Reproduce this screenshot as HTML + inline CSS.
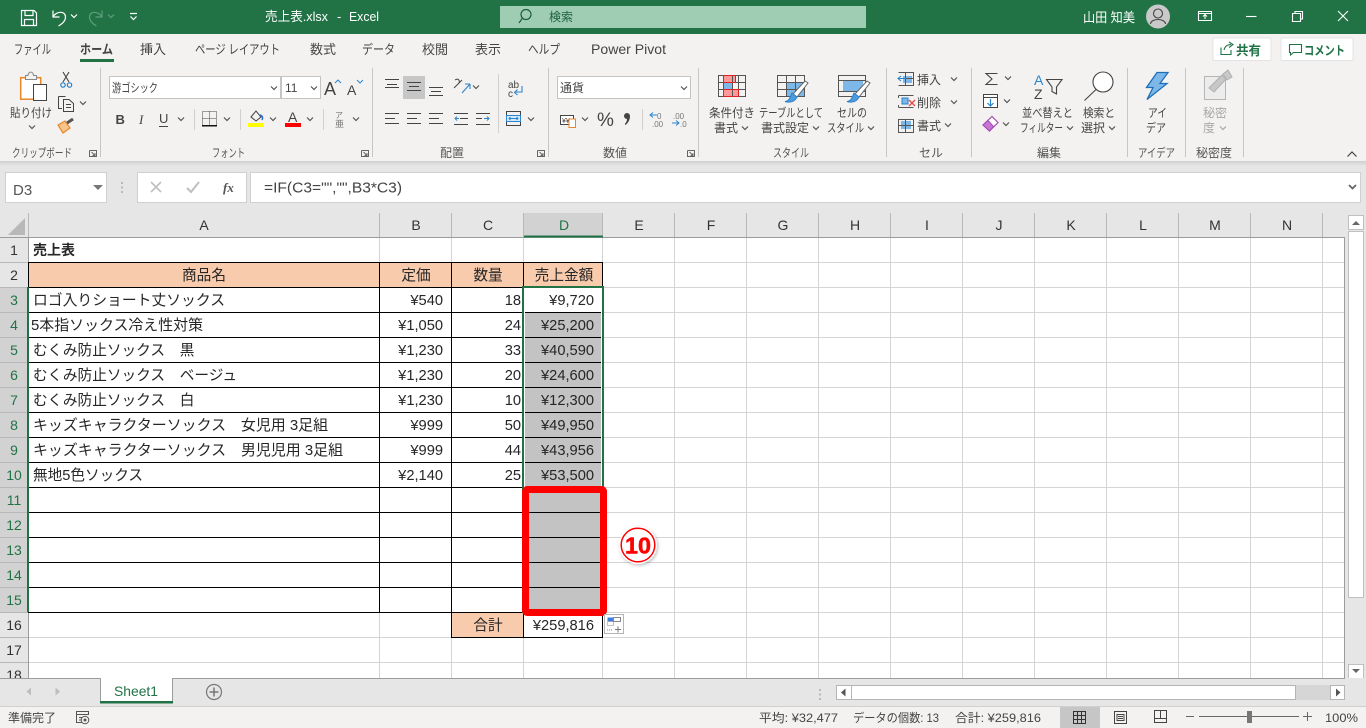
<!DOCTYPE html>
<html lang="ja"><head><meta charset="utf-8"><title>売上表.xlsx - Excel</title>
<style>
html,body{margin:0;padding:0;background:#e6e6e6;overflow:hidden}
svg{display:block;font-family:"Liberation Sans","Noto Sans CJK JP",sans-serif}
.t{font-size:13px;fill:#444}
.r{font-size:12px;fill:#444}
.g{font-size:12px;fill:#555}
.c{font-size:14.67px;fill:#262626}
.h{font-size:14px;fill:#333}
.hg{font-size:14px;fill:#217346}
.e{text-anchor:end}.m{text-anchor:middle}
.s{font-size:12px;fill:#444}
</style></head><body>
<svg width="1366" height="728" viewBox="0 0 1366 728" xmlns="http://www.w3.org/2000/svg">
<defs>
<path id="cv" d="M-3 -1.5L0 1.5L3 -1.5" fill="none" stroke="#555" stroke-width="1.2"/>
<path id="cw" d="M-3 -1.5L0 1.5L3 -1.5" fill="none" stroke="#fff" stroke-width="1.2"/>
<path id="lf" d="M0 .5H14M0 5.5H10M0 10.5H14" fill="none" stroke="#444" stroke-width="1"/>
<linearGradient id="sh" x1="0" y1="0" x2="0" y2="1"><stop offset="0" stop-color="#cfcfcf"/><stop offset="1" stop-color="#e6e6e6"/></linearGradient>
<filter id="ds" x="-30%" y="-30%" width="160%" height="160%"><feDropShadow dx="1" dy="1.500" stdDeviation="1.500" flood-color="#000" flood-opacity=".25"/></filter>
</defs>
<rect width="1366" height="728" fill="#e6e6e6"/>
<!-- title bar -->
<rect width="1366" height="34" fill="#217346"/>
<g fill="none" stroke="#fff" stroke-width="1.2">
<path d="M21.5 10.5H34L36.5 13V25.5H21.5Z"/><path d="M25 10.5V15.5H33V10.5M24.5 25.5V19.5H33.5V25.5"/>
<path d="M53 10.5V17H59.5M53 17C56 11 65.5 10.5 65.5 17C65.5 21 62 24 58.5 26"/>
<g stroke="#5f9c7e"><path d="M102 10.5V17H95.5M102 17C99 11 89.5 10.5 89.5 17C89.5 21 93 24 96.5 26"/></g>
<path d="M130 13.5H137" />
</g>
<use href="#cw" x="74" y="16"/><use href="#cw" x="133.500" y="18"/>
<path d="M108 14.500L111 17.500L114 14.500" fill="none" stroke="#5f9c7e" stroke-width="1.200"/>
<text x="265" y="21" font-size="13" fill="#fff" textLength="63" lengthAdjust="spacingAndGlyphs">売上表.xlsx</text>
<text x="337" y="21" font-size="13" fill="#fff">-</text>
<text x="349" y="21" font-size="13" fill="#fff" textLength="30" lengthAdjust="spacingAndGlyphs">Excel</text>
<rect x="500" y="6" width="366" height="22" fill="#9fcdb3"/>
<circle cx="526" cy="14.500" r="5" fill="none" stroke="#1e5f3c" stroke-width="1.200"/><path d="M522.500 18L519 23" stroke="#1e5f3c" stroke-width="1.200"/>
<text x="549" y="21" font-size="12" fill="#1e5f3c" textLength="24" lengthAdjust="spacingAndGlyphs">検索</text>
<text x="1083" y="22" font-size="13" fill="#fff" textLength="52" lengthAdjust="spacingAndGlyphs">山田 知美</text>
<circle cx="1158" cy="16.500" r="12" fill="#c9c9c9"/>
<circle cx="1158" cy="13.500" r="4.500" fill="none" stroke="#444" stroke-width="1.100"/><path d="M1150.500 24C1151 18 1165 18 1165.500 24" fill="none" stroke="#444" stroke-width="1.100"/>
<g fill="none" stroke="#fff" stroke-width="1.100">
<path d="M1198.500 11.500H1211.500V20.500H1198.500ZM1198.500 13.500H1211.500M1205 19V15M1203 16.500L1205 14.500L1207 16.500"/>
<path d="M1246 16.500H1256.500"/>
<path d="M1292.500 13.500H1300.500V21.500H1292.500ZM1295 13.500V11.500H1302.500V19H1300.500"/>
<path d="M1338 11L1348 21M1348 11L1338 21"/>
</g>
<!-- ribbon -->
<rect y="34" width="1366" height="127" fill="#f3f2f1"/>
<rect y="161" width="1366" height="5" fill="url(#sh)"/>
<text x="14" y="54" class="t" textLength="37" lengthAdjust="spacingAndGlyphs">ファイル</text>
<text x="80" y="54" class="t" font-weight="700" textLength="33" lengthAdjust="spacingAndGlyphs">ホーム</text>
<rect x="80" y="59" width="34" height="3" fill="#217346"/>
<text x="140" y="54" class="t" textLength="26" lengthAdjust="spacingAndGlyphs">挿入</text>
<text x="195" y="54" class="t" textLength="85" lengthAdjust="spacingAndGlyphs">ページ レイアウト</text>
<text x="310" y="54" class="t" textLength="26" lengthAdjust="spacingAndGlyphs">数式</text>
<text x="362" y="54" class="t" textLength="33" lengthAdjust="spacingAndGlyphs">データ</text>
<text x="422" y="54" class="t" textLength="26" lengthAdjust="spacingAndGlyphs">校閲</text>
<text x="475" y="54" class="t" textLength="26" lengthAdjust="spacingAndGlyphs">表示</text>
<text x="528" y="54" class="t" textLength="32" lengthAdjust="spacingAndGlyphs">ヘルプ</text>
<text x="591" y="54" font-size="14" fill="#444" textLength="75" lengthAdjust="spacingAndGlyphs">Power Pivot</text>
<rect x="1213" y="38" width="58" height="22.500" rx="1" fill="#fff" stroke="#e3e3e3"/>
<path d="M1221 47.500V54.500H1231V50M1224 50C1225 46 1228 44.500 1231 44.500M1229 42L1233 44.500L1229 47.500" fill="none" stroke="#217346" stroke-width="1.100"/>
<text x="1236" y="55" font-size="13" font-weight="700" fill="#217346" textLength="25" lengthAdjust="spacingAndGlyphs">共有</text>
<rect x="1281" y="38" width="72" height="22.500" rx="1" fill="#fff" stroke="#e3e3e3"/>
<path d="M1289.500 44.500H1301.500V52.500H1293.500L1290.500 55V52.500H1289.500Z" fill="none" stroke="#217346" stroke-width="1.100"/>
<text x="1304" y="55" font-size="12.500" font-weight="700" fill="#217346" textLength="41" lengthAdjust="spacingAndGlyphs">コメント</text>
<!-- separators -->
<path d="M100.500 68V157M372.500 68V157M548.500 68V157M698.500 68V157M886.500 68V157M971.500 68V157M1127.500 68V157M1185.500 68V157M1243.500 68V157" stroke="#c6c6c6" fill="none"/>
<path d="M194.500 109V130M240.500 109V130M323.500 109V130M498.500 74V133M642.500 109V130" stroke="#d0d0d0" fill="none"/>
<!-- group labels -->
<text x="12" y="157" class="g" textLength="60" lengthAdjust="spacingAndGlyphs">クリップボード</text>
<text x="212" y="157" class="g" textLength="33" lengthAdjust="spacingAndGlyphs">フォント</text>
<text x="440" y="157" class="g" textLength="24" lengthAdjust="spacingAndGlyphs">配置</text>
<text x="603" y="157" class="g" textLength="24" lengthAdjust="spacingAndGlyphs">数値</text>
<text x="773" y="157" class="g" textLength="36" lengthAdjust="spacingAndGlyphs">スタイル</text>
<text x="919" y="157" class="g" textLength="24" lengthAdjust="spacingAndGlyphs">セル</text>
<text x="1037" y="157" class="g" textLength="24" lengthAdjust="spacingAndGlyphs">編集</text>
<text x="1138" y="157" class="g" textLength="37" lengthAdjust="spacingAndGlyphs">アイデア</text>
<text x="1196" y="157" class="g" textLength="36" lengthAdjust="spacingAndGlyphs">秘密度</text>
<g fill="none" stroke="#666" stroke-width="1">
<path d="M89.500 150.500V156.500H96.500V150.500H89.500M91.500 152L95 155.500M95 153V155.500H92.500"/>
<path d="M361.500 150.500V156.500H368.500V150.500H361.500M363.500 152L367 155.500M367 153V155.500H364.500"/>
<path d="M537.500 150.500V156.500H544.500V150.500H537.500M539.500 152L543 155.500M543 153V155.500H540.500"/>
<path d="M687.500 150.500V156.500H694.500V150.500H687.500M689.500 152L693 155.500M693 153V155.500H690.500"/>
<path d="M1347.500 156.500L1352 152L1356.500 156.500" stroke="#444" stroke-width="1.200"/>
</g>
<!-- clipboard -->
<rect x="20.700" y="77.700" width="20" height="21.500" fill="#fff" stroke="#e8862a" stroke-width="1.500"/>
<path d="M25.500 79.500V75.500H28C28.500 71 33 71 33.500 75.500H36.500V79.500Z" fill="#f3f2f1" stroke="#888"/>
<rect x="33.500" y="84.500" width="13" height="16" fill="#fff" stroke="#444"/>
<text x="10" y="117" class="r" textLength="42" lengthAdjust="spacingAndGlyphs">貼り付け</text>
<use href="#cv" x="32" y="127"/>
<g fill="none" stroke="#444" stroke-width="1.100"><path d="M63 72L69 82M69 72L63 82"/></g>
<circle cx="63" cy="85" r="2.200" fill="none" stroke="#2a7fc9" stroke-width="1.200"/><circle cx="69.500" cy="85" r="2.200" fill="none" stroke="#2a7fc9" stroke-width="1.200"/>
<path d="M58.500 96.500H65.500M58.500 96.500V108.500H62M63.500 99.500H69L73.500 103.500V111.500H63.500ZM66 104.500H71M66 107.500H71" fill="none" stroke="#444" stroke-width="1"/>
<use href="#cv" x="83" y="103"/>
<path d="M58 125L65 121L70 128L63 133Z" fill="#f7c58a" stroke="#e8862a" stroke-width="1.200"/>
<path d="M67 123L73 119" stroke="#555" stroke-width="3"/>
<!-- font -->
<rect x="109.500" y="76.500" width="171" height="22" fill="#fff" stroke="#c4c4c4"/>
<text x="112" y="92" class="r" textLength="46" lengthAdjust="spacingAndGlyphs">游ゴシック</text>
<use href="#cv" x="274" y="88"/>
<rect x="281.500" y="76.500" width="39" height="22" fill="#fff" stroke="#c4c4c4"/>
<text x="285" y="92" font-size="12" fill="#444">11</text>
<use href="#cv" x="314" y="88"/>
<text x="324" y="95" font-size="18" fill="#444">A</text>
<path d="M335 83L338 80L341 83" fill="none" stroke="#2a86d0" stroke-width="1"/>
<text x="347" y="95" font-size="14" fill="#444">A</text>
<path d="M357 80L360 83L363 80" fill="none" stroke="#2a86d0" stroke-width="1"/>
<text x="115.500" y="124" font-size="13" font-weight="700" fill="#444">B</text>
<text x="139" y="124" font-size="13" font-style="italic" font-family="Liberation Serif" fill="#444">I</text>
<text x="159" y="123" font-size="13" fill="#444">U</text><path d="M159 126.500H168" stroke="#444"/>
<use href="#cv" x="181" y="119"/>
<path d="M202.500 111.500H216.500V125.500H202.500ZM209.500 111.500V125.500M202.500 118.500H216.500" fill="none" stroke="#444" stroke-dasharray="1 1"/>
<rect x="202" y="125" width="15" height="1.500" fill="#111"/>
<use href="#cv" x="227" y="119"/>
<path d="M251 117L256 111L261 117L256 121Z" fill="none" stroke="#444"/>
<path d="M260 115C263 116 263 118 262 120" stroke="#2a6fc9" stroke-width="1.500" fill="none"/>
<rect x="248" y="123" width="16" height="4" fill="#ffff00"/>
<use href="#cv" x="273" y="119"/>
<text x="288" y="122" font-size="14" fill="#444">A</text>
<rect x="285" y="123" width="16" height="4" fill="#ff0000"/>
<use href="#cv" x="310" y="119"/>
<text x="335" y="118" font-size="8" fill="#777">ア</text>
<text x="335" y="127" font-size="9" fill="#777">亜</text>
<use href="#cv" x="356" y="119"/>
<!-- alignment -->
<rect x="403" y="76" width="22" height="23" fill="#c6c6c6"/>
<g fill="none" stroke="#444" stroke-width="1">
<path d="M385 79.500H399M387 84.500H397M385 87.500H399"/>
<path d="M407 82.500H421M409 86.500H419M407 90.500H421"/>
<path d="M429 87.500H443M431 91.500H441M429 95.500H443"/>
</g>
<path d="M454 88L462 80M455 80C458 78 460 80 459 83" fill="none" stroke="#444"/>
<path d="M462 93L470 84M470 84H465M470 84V89" fill="none" stroke="#2a86d0" stroke-width="1.100"/>
<use href="#cv" x="476" y="87"/>
<text x="508" y="88" font-size="10" fill="#444">ab</text>
<text x="508" y="97" font-size="10" fill="#444">c</text>
<path d="M522 86V92H515M517.500 89.500L514.500 92.500L517.500 95" fill="none" stroke="#2a86d0" stroke-width="1.100"/>
<use href="#lf" x="385" y="113"/><use href="#lf" x="407" y="113"/><use href="#lf" x="429" y="113"/>
<path d="M454 113.500H468M460 118.500H468M454 124.500H468M476 113.500H490M476 118.500H482M476 124.500H490" stroke="#444" fill="none"/>
<path d="M455 118.500H459M457 116.500L455 118.500L457 120.500" stroke="#2a86d0" fill="none"/>
<path d="M484 118.500H489M487 116.500L489 118.500L487 120.500" stroke="#2a86d0" fill="none"/>
<rect x="506.500" y="111.500" width="14" height="14" fill="none" stroke="#444"/>
<rect x="506.500" y="115.500" width="14" height="6" fill="#d6e9f8" stroke="#2a86d0"/>
<path d="M509 118.500H518M510.500 117L509 118.500L510.500 120M516.500 117L518 118.500L516.500 120" stroke="#2a86d0" fill="none"/>
<use href="#cv" x="531" y="119"/>
<!-- number -->
<rect x="557.500" y="76.500" width="133" height="22" fill="#fff" stroke="#c4c4c4"/>
<text x="560" y="92" class="r" textLength="24" lengthAdjust="spacingAndGlyphs">通貨</text>
<use href="#cv" x="684" y="88"/>
<rect x="560.500" y="115.500" width="13" height="9" fill="#fff" stroke="#444"/>
<text x="562" y="123" font-size="7" fill="#444">¥¥</text>
<rect x="569" y="119" width="6.500" height="8.500" fill="#fff" stroke="#e8862a"/>
<use href="#cv" x="585" y="119"/>
<text x="597" y="126" font-size="19" fill="#444">%</text>
<path d="M624 116a3 3 0 1 1 6 0C630 120 628 123 625.500 125L624.800 124C626.500 122 627 120.500 627 119A3 3 0 0 1 624 116Z" fill="#444"/>
<text x="657" y="119" font-size="8" fill="#777">0</text>
<text x="652" y="127" font-size="8" fill="#777">.00</text>
<path d="M650 115H657M653 112.500L650 115L653 117.500" stroke="#2a86d0" fill="none"/>
<text x="673" y="119" font-size="8" fill="#777">.00</text>
<text x="680" y="127" font-size="8" fill="#777">.0</text>
<path d="M672 123H679M676 120.500L679 123L676 125.500" stroke="#2a86d0" fill="none"/>
<!-- styles -->
<g shape-rendering="crispEdges">
<rect x="723" y="75" width="13" height="7" fill="#ff9999"/><rect x="723" y="82" width="9" height="7" fill="#7db8e8"/><rect x="723" y="89" width="15" height="8" fill="#ff9999"/>
<path d="M718.500 75.500H745.500V96.500H718.500ZM718.500 82.500H745.500M718.500 89.500H745.500M723.500 75.500V96.500M732.500 75.500V96.500M738.500 75.500V96.500" fill="none" stroke="#555"/>
<path d="M723.500 75.500H735.500V82.500H723.500ZM723.500 89.500H738.500V96.500H723.500Z" fill="none" stroke="#d22"/>
<rect x="786" y="82" width="19" height="15" fill="#7db8e8"/>
<path d="M777.500 75.500H804.500V96.500H777.500ZM777.500 82.500H804.500M777.500 89.500H804.500M786.500 75.500V96.500M795.500 75.500V96.500" fill="none" stroke="#555"/>
<rect x="843" y="80" width="20" height="12" fill="#7db8e8"/>
<path d="M838.500 75.500H865.500V96.500H838.500ZM838.500 80.500H865.500M838.500 91.500H865.500" fill="none" stroke="#555"/>
</g>
<g>
<path d="M793 94L805 81L808 83L797 97Z" fill="#fff" stroke="#666"/><path d="M785 101.500C789 101 790 98 792 93L797 97C795 102 789 103 785 101.500Z" fill="#4d9cdc" stroke="#2a7fc9"/>
<path d="M855 94L867 81L870 83L859 97Z" fill="#fff" stroke="#666"/><path d="M847 101.500C851 101 852 98 854 93L859 97C857 102 851 103 847 101.500Z" fill="#4d9cdc" stroke="#2a7fc9"/>
</g>
<text x="709" y="117" class="r" textLength="46" lengthAdjust="spacingAndGlyphs">条件付き</text>
<text x="714" y="132" class="r" textLength="24" lengthAdjust="spacingAndGlyphs">書式</text><use href="#cv" x="745" y="128"/>
<text x="759" y="117" class="r" textLength="64" lengthAdjust="spacingAndGlyphs">テーブルとして</text>
<text x="761" y="132" class="r" textLength="48" lengthAdjust="spacingAndGlyphs">書式設定</text><use href="#cv" x="816" y="128"/>
<text x="837" y="117" class="r" textLength="30" lengthAdjust="spacingAndGlyphs">セルの</text>
<text x="827" y="132" class="r" textLength="37" lengthAdjust="spacingAndGlyphs">スタイル</text><use href="#cv" x="871" y="128"/>
<!-- cells -->
<g shape-rendering="crispEdges" fill="none" stroke="#555">
<rect x="903" y="76" width="9" height="7" fill="#7db8e8" stroke="none"/>
<path d="M898.500 72.500H913.500V85.500H898.500M898.500 78.500H913.500M905.500 72.500V85.500"/>
<rect x="902" y="98" width="6" height="6" fill="#7db8e8" stroke="#2a7fc9"/>
<path d="M898.500 95.500H913.500M898.500 107.500H913.500M898.500 95.500V98M898.500 105V107.500"/>
<rect x="901" y="121" width="10" height="8" fill="#7db8e8" stroke="none"/>
<path d="M898.500 119.500H913.500V132.500H898.500ZM898.500 125.500H913.500M905.500 119.500V132.500"/>
</g>
<path d="M909 100L915 106M915 100L909 106" stroke="#e44" stroke-width="1.300"/>
<path d="M906 78.500H898M901 76L898 78.500L901 81" stroke="#2a86d0" fill="none" stroke-width="1.100"/>
<text x="917" y="84" class="r" textLength="24" lengthAdjust="spacingAndGlyphs">挿入</text><use href="#cv" x="954" y="79"/>
<text x="917" y="107" class="r" textLength="24" lengthAdjust="spacingAndGlyphs">削除</text><use href="#cv" x="954" y="102"/>
<text x="917" y="130" class="r" textLength="24" lengthAdjust="spacingAndGlyphs">書式</text><use href="#cv" x="948" y="125"/>
<!-- edit -->
<path d="M997.500 73.500H986L992 79L986 84.500H997.500" fill="none" stroke="#444" stroke-width="1.100"/>
<use href="#cv" x="1008" y="78"/>
<rect x="983.500" y="94.500" width="14" height="13" fill="#fff" stroke="#444"/>
<path d="M983.500 97.500H997.500" stroke="#444"/><path d="M990.500 99V106M987.500 103L990.500 106L993.500 103" stroke="#2a86d0" fill="none" stroke-width="1.200"/>
<use href="#cv" x="1007" y="101"/>
<path d="M983 125L992 116.500L998 122.500L989.500 131Z" fill="#fff" stroke="#a64ab5" stroke-width="1.200"/>
<path d="M983 125L988 120.500L993.500 126.500L989.500 131Z" fill="#c874d5" stroke="#a64ab5"/>
<use href="#cv" x="1006" y="124"/>
<text x="1034" y="85" font-size="14" fill="#2a86d0">A</text>
<text x="1034" y="99" font-size="14" fill="#444">Z</text>
<path d="M1046.500 79.500H1062L1056.500 87V94L1052 91.500V87Z" fill="none" stroke="#444" stroke-width="1.100"/>
<text x="1022" y="117" class="r" textLength="51" lengthAdjust="spacingAndGlyphs">並べ替えと</text>
<text x="1020" y="132" class="r" textLength="43" lengthAdjust="spacingAndGlyphs">フィルター</text><use href="#cv" x="1070" y="128"/>
<circle cx="1103" cy="82" r="10" fill="#fff" stroke="#444" stroke-width="1.100"/><path d="M1096 89.500L1084.500 100.500" stroke="#444" stroke-width="1.100"/>
<text x="1083" y="117" class="r" textLength="32" lengthAdjust="spacingAndGlyphs">検索と</text>
<text x="1081" y="132" class="r" textLength="24" lengthAdjust="spacingAndGlyphs">選択</text><use href="#cv" x="1112" y="128"/>
<path d="M1157 72.500H1168L1160 83.500H1167L1147 99.500L1153 87.500H1146.500Z" fill="#7db8e8" stroke="#1f6fb8" stroke-width="1.300"/>
<text x="1148" y="117" class="r" textLength="19" lengthAdjust="spacingAndGlyphs">アイ</text>
<text x="1146" y="132" class="r" textLength="20" lengthAdjust="spacingAndGlyphs">デア</text>
<rect x="1204.500" y="76.500" width="21" height="23" fill="#ececec" stroke="#b5b5b5"/>
<path d="M1209 88L1222 75L1226 79L1214 92ZM1223 74L1228 70L1232 77L1227 80Z" fill="#c8c8c8" stroke="#b0b0b0"/>
<text x="1203" y="117" font-size="12" fill="#a8a8a8" textLength="24" lengthAdjust="spacingAndGlyphs">秘密</text>
<text x="1203" y="132" font-size="12" fill="#a8a8a8" textLength="12" lengthAdjust="spacingAndGlyphs">度</text>
<path d="M1220 126.500L1223 129.500L1226 126.500" fill="none" stroke="#a8a8a8" stroke-width="1.200"/>
<!-- formula bar -->
<rect x="5.500" y="172.500" width="101" height="30" fill="#fff" stroke="#d0d0d0"/>
<text x="13" y="195" font-size="15" fill="#555">D3</text>
<path d="M93 185H103L98 190Z" fill="#777"/>
<path d="M122 182V184M122 186.500V188.500M122 191V193" stroke="#aaa" stroke-width="1.500"/>
<rect x="137.500" y="172.500" width="109" height="30" fill="#fff" stroke="#d0d0d0"/>
<path d="M151 182L161 192M161 182L151 192" stroke="#bfbfbf" stroke-width="1.600"/>
<path d="M187 188L191 192L199 182" fill="none" stroke="#bfbfbf" stroke-width="2"/>
<text x="223" y="192" font-size="13" font-style="italic" font-weight="700" font-family="Liberation Serif" fill="#555">fx</text>
<rect x="250.500" y="172.500" width="1110" height="30" fill="#fff" stroke="#d0d0d0"/>
<text x="264" y="192.500" font-size="14.500" fill="#444" textLength="138" lengthAdjust="spacingAndGlyphs">=IF(C3="","",B3*C3)</text>
<path d="M1349 185L1352.500 188.500L1356 185" fill="none" stroke="#666" stroke-width="1.800"/>
<!-- sheet bg -->
<rect x="29" y="238" width="1316" height="440" fill="#fff"/>
<rect x="0" y="213" width="1345" height="24" fill="#e6e6e6"/>
<rect x="0" y="238" width="28" height="440" fill="#e6e6e6"/>
<rect x="0" y="287" width="28" height="325" fill="#d2d2d2"/>
<rect x="524" y="213" width="78" height="24" fill="#d2d2d2"/>
<polygon points="25,218 25,235 8,235" fill="#b8b8b8"/>
<rect x="29" y="263" width="573" height="24" fill="#f8cbad"/>
<rect x="452" y="613" width="71" height="24" fill="#f8cbad"/>
<rect x="525" y="313" width="76" height="299" fill="#c3c3c3"/>
<g shape-rendering="crispEdges" fill="none">
<path stroke="#d4d4d4" d="M379.500 238V678M451.500 238V678M523.500 238V678M602.500 238V678M674.500 238V678M746.500 238V678M818.500 238V678M890.500 238V678M962.500 238V678M1034.500 238V678M1106.500 238V678M1178.500 238V678M1250.500 238V678M1322.500 238V678M29 262.500H1344M29 287.500H1344M29 312.500H1344M29 337.500H1344M29 362.500H1344M29 387.500H1344M29 412.500H1344M29 437.500H1344M29 462.500H1344M29 487.500H1344M29 512.500H1344M29 537.500H1344M29 562.500H1344M29 587.500H1344M29 612.500H1344M29 637.500H1344M29 662.500H1344"/>
<path stroke="#b8b8b8" d="M28.500 213V237M379.500 213V237M451.500 213V237M523.500 213V237M602.500 213V237M674.500 213V237M746.500 213V237M818.500 213V237M890.500 213V237M962.500 213V237M1034.500 213V237M1106.500 213V237M1178.500 213V237M1250.500 213V237M1322.500 213V237M0 262.500H28M0 287.500H28M0 312.500H28M0 337.500H28M0 362.500H28M0 387.500H28M0 412.500H28M0 437.500H28M0 462.500H28M0 487.500H28M0 512.500H28M0 537.500H28M0 562.500H28M0 587.500H28M0 612.500H28M0 637.500H28M0 662.500H28"/>
<path stroke="#9c9c9c" d="M0 237.500H1345M28.500 237V678M1344.500 237V678"/>
<path stroke="#000" d="M28.500 262V612M379.500 262V612M451.500 262V637M523.500 262V287M602.500 262V287M523.500 612V637M602.500 612V637M28 262.500H603M28 287.500H603M28 312.500H603M28 337.500H603M28 362.500H603M28 387.500H603M28 412.500H603M28 437.500H603M28 462.500H603M28 487.500H603M28 512.500H603M28 537.500H603M28 562.500H603M28 587.500H603M28 612.500H603M451 637.500H603"/>
</g>
<rect x="524" y="288" width="1" height="324" fill="#fff"/>
<rect x="601" y="288" width="1" height="324" fill="#fff"/>
<g fill="#217346" shape-rendering="crispEdges">
<rect x="27" y="287" width="2" height="325"/>
<rect x="524" y="235.500" width="79" height="2"/>
<rect x="522" y="286" width="82" height="2"/>
<rect x="522" y="286" width="2" height="327"/>
<rect x="602" y="286" width="2" height="327"/>
</g>
<!-- headers -->
<g class="m">
<text x="204" y="230" class="h m">A</text><text x="416" y="230" class="h m">B</text><text x="488" y="230" class="h m">C</text><text x="564" y="230" class="hg m">D</text><text x="639" y="230" class="h m">E</text><text x="711" y="230" class="h m">F</text><text x="783" y="230" class="h m">G</text><text x="855" y="230" class="h m">H</text><text x="927" y="230" class="h m">I</text><text x="999" y="230" class="h m">J</text><text x="1071" y="230" class="h m">K</text><text x="1143" y="230" class="h m">L</text><text x="1215" y="230" class="h m">M</text><text x="1287" y="230" class="h m">N</text>
</g>
<text x="14" y="255" class="h m">1</text><text x="14" y="280" class="h m">2</text>
<text x="14" y="305" class="hg m">3</text><text x="14" y="330" class="hg m">4</text><text x="14" y="355" class="hg m">5</text><text x="14" y="380" class="hg m">6</text><text x="14" y="405" class="hg m">7</text><text x="14" y="430" class="hg m">8</text><text x="14" y="455" class="hg m">9</text><text x="14" y="480" class="hg m">10</text><text x="14" y="505" class="hg m">11</text><text x="14" y="530" class="hg m">12</text><text x="14" y="555" class="hg m">13</text><text x="14" y="580" class="hg m">14</text><text x="14" y="605" class="hg m">15</text>
<text x="14" y="630" class="h m">16</text><text x="14" y="655" class="h m">17</text><text x="14" y="680" class="h m">18</text>
<!-- cells -->
<text x="33" y="255" class="c" font-weight="700" style="font-size:14px">売上表</text>
<text x="204" y="280" class="c m">商品名</text><text x="416" y="280" class="c m">定価</text><text x="488" y="280" class="c m">数量</text><text x="564" y="280" class="c m">売上金額</text>
<text x="33" y="305" class="c" textLength="192" lengthAdjust="spacingAndGlyphs">ロゴ入りショート丈ソックス</text><text x="443" y="305" class="c e">¥540</text><text x="521" y="305" class="c e">18</text><text x="594" y="305" class="c e">¥9,720</text>
<text x="31" y="330" class="c" textLength="172" lengthAdjust="spacingAndGlyphs">5本指ソックス冷え性対策</text><text x="443" y="330" class="c e">¥1,050</text><text x="521" y="330" class="c e">24</text><text x="594" y="330" class="c e">¥25,200</text>
<text x="33" y="355" class="c">むくみ防止ソックス　黒</text><text x="443" y="355" class="c e">¥1,230</text><text x="521" y="355" class="c e">33</text><text x="594" y="355" class="c e">¥40,590</text>
<text x="33" y="380" class="c">むくみ防止ソックス　ベージュ</text><text x="443" y="380" class="c e">¥1,230</text><text x="521" y="380" class="c e">20</text><text x="594" y="380" class="c e">¥24,600</text>
<text x="33" y="405" class="c">むくみ防止ソックス　白</text><text x="443" y="405" class="c e">¥1,230</text><text x="521" y="405" class="c e">10</text><text x="594" y="405" class="c e">¥12,300</text>
<text x="33" y="430" class="c" textLength="295" lengthAdjust="spacingAndGlyphs">キッズキャラクターソックス　女児用 3足組</text><text x="443" y="430" class="c e">¥999</text><text x="521" y="430" class="c e">50</text><text x="594" y="430" class="c e">¥49,950</text>
<text x="33" y="455" class="c" textLength="310" lengthAdjust="spacingAndGlyphs">キッズキャラクターソックス　男児児用 3足組</text><text x="443" y="455" class="c e">¥999</text><text x="521" y="455" class="c e">44</text><text x="594" y="455" class="c e">¥43,956</text>
<text x="33" y="480" class="c" textLength="110" lengthAdjust="spacingAndGlyphs">無地5色ソックス</text><text x="443" y="480" class="c e">¥2,140</text><text x="521" y="480" class="c e">25</text><text x="594" y="480" class="c e">¥53,500</text>
<text x="488" y="630" class="c m">合計</text><text x="594" y="630" class="c e">¥259,816</text>
<!-- red annotation -->
<rect x="525.500" y="489.500" width="78" height="123" rx="2" fill="none" stroke="#ff0000" stroke-width="7"/>
<circle cx="638" cy="545" r="19" fill="#fff" filter="url(#ds)"/>
<circle cx="638" cy="545" r="16.800" fill="#fff" stroke="#ff0000" stroke-width="1.500"/>
<text x="638" y="553.500" font-size="23" font-weight="700" fill="#ff0000" stroke="#ff0000" stroke-width=".5" text-anchor="middle" textLength="26" lengthAdjust="spacingAndGlyphs">10</text>
<!-- quick analysis -->
<rect x="604.500" y="614.500" width="19" height="19" fill="#fff" stroke="#b5b5b5"/>
<rect x="607.500" y="617.500" width="6" height="4" fill="#3d7fe0"/>
<rect x="613.500" y="617.500" width="7" height="4" fill="none" stroke="#888"/>
<path d="M607.500 621.500H613.500V625.500H607.500ZM607 630H613" fill="none" stroke="#888" stroke-dasharray="1 1"/>
<path d="M615 629.500H621M618 626.500V632.500" stroke="#777"/>
<!-- vertical scrollbar -->
<rect x="1345" y="213" width="21" height="465" fill="#e6e6e6"/>
<path d="M1344.500 237V678" stroke="#9c9c9c"/>
<rect x="1348.500" y="215.500" width="15" height="14" fill="#fff" stroke="#c0c0c0"/>
<path d="M1352 225H1360L1356 221Z" fill="#666"/>
<rect x="1348.500" y="231.500" width="15" height="366" fill="#fff" stroke="#c0c0c0"/>
<rect x="1348.500" y="664.500" width="15" height="14" fill="#fff" stroke="#c0c0c0"/>
<path d="M1352 669H1360L1356 673Z" fill="#666"/>
<!-- tab bar -->
<rect y="678" width="1366" height="28" fill="#e6e6e6"/>
<path d="M0 678.500H1345" stroke="#9c9c9c"/>
<path d="M31 687.500V695.500L26.500 691.500ZM55.500 687.500V695.500L60 691.500Z" fill="#bdbdbd"/>
<rect x="100.500" y="678" width="72" height="24" fill="#fff"/>
<path d="M100.500 678V702M172.500 678V702" stroke="#9c9c9c"/>
<rect x="100" y="701" width="73" height="2.500" fill="#217346"/>
<text x="114" y="696" font-size="14" fill="#217346" textLength="44" lengthAdjust="spacingAndGlyphs">Sheet1</text>
<circle cx="214" cy="692" r="7.500" fill="none" stroke="#777" stroke-width="1.200"/>
<path d="M214 687.500V696.500M209.500 692H218.500" stroke="#777" stroke-width="1.500"/>
<path d="M820 689V691M820 693.500V695.500M820 698V700" stroke="#aaa" stroke-width="1.500"/>
<rect x="836" y="685" width="509" height="15" fill="#d6d6d6"/>
<rect x="836.500" y="685.500" width="15" height="14" fill="#fff" stroke="#b5b5b5"/>
<path d="M845.500 688.500V696.500L841 692.500Z" fill="#555"/>
<rect x="851.500" y="685.500" width="444" height="14" fill="#fff" stroke="#b5b5b5"/>
<rect x="1330.500" y="685.500" width="14" height="14" fill="#fff" stroke="#b5b5b5"/>
<path d="M1336 688.500V696.500L1340.500 692.500Z" fill="#555"/>
<!-- status bar -->
<rect y="706" width="1366" height="22" fill="#f3f2f1"/>
<path d="M0 706.500H1366" stroke="#d0d0d0"/>
<text x="8" y="722" class="s" textLength="48" lengthAdjust="spacingAndGlyphs">準備完了</text>
<path d="M76.500 711.500H88.500V714.500H76.500ZM76.500 714.500V722.500H82M79 717.500H84M79 720H81" fill="none" stroke="#555"/>
<circle cx="85" cy="720" r="3.800" fill="#f3f2f1" stroke="#555"/><circle cx="85" cy="720" r="1.500" fill="#555"/>
<text x="759" y="722" class="s" textLength="79" lengthAdjust="spacingAndGlyphs">平均: ¥32,477</text>
<text x="853" y="722" class="s" textLength="86" lengthAdjust="spacingAndGlyphs">データの個数: 13</text>
<text x="955" y="722" class="s" textLength="86" lengthAdjust="spacingAndGlyphs">合計: ¥259,816</text>
<rect x="1060" y="707" width="40" height="21" fill="#c6c6c6"/>
<path d="M1073.500 711.500H1085.500V723.500H1073.500ZM1073.500 715.500H1085.500M1073.500 719.500H1085.500M1077.500 711.500V723.500M1081.500 711.500V723.500" fill="none" stroke="#333" shape-rendering="crispEdges"/>
<path d="M1114.500 711.500H1126.500V723.500H1114.500ZM1117 714.500H1124V720.500H1117ZM1118 716.500H1123M1118 718.500H1123" fill="none" stroke="#444" shape-rendering="crispEdges"/>
<path d="M1154.500 710.500H1166.500V722.500H1154.500ZM1160.500 710.500V718.500H1154.500M1160.500 718.500H1166.500" fill="none" stroke="#444" shape-rendering="crispEdges"/>
<path d="M1186 716.500H1194M1199 716.500H1299M1303 716.500H1312M1307.500 712V721" stroke="#666" fill="none" shape-rendering="crispEdges"/>
<rect x="1247" y="711" width="5" height="12" fill="#777"/>
<text x="1325" y="722" font-size="12" fill="#444" textLength="33" lengthAdjust="spacingAndGlyphs">100%</text>
</svg>
</body></html>
